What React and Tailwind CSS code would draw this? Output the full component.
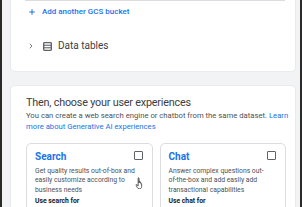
import { ChevronRight, Plus } from 'lucide-react';

function TableIcon() {
  return (
    <svg width="9" height="9" viewBox="0 0 10 10" className="shrink-0">
      <rect x="0.75" y="0.75" width="8.5" height="8.5" rx="0.8" fill="none" stroke="#5f6368" strokeWidth="1.5" />
      <line x1="1" y1="3.6" x2="9" y2="3.6" stroke="#5f6368" strokeWidth="1.2" />
      <line x1="1" y1="6.4" x2="9" y2="6.4" stroke="#5f6368" strokeWidth="1.2" />
    </svg>
  );
}

function Hand() {
  return (
    <svg width="10" height="12" viewBox="0 0 11 13" className="absolute left-[108px] top-[33px]">
      <path d="M3.5 1.2c0-.6.9-.6.9 0v5l.2-1.2c0-.6.9-.6.9 0v1.4c0-.6.9-.6.9 0v1c0-.5.9-.5.9 0v3c0 1.5-1 2.4-2.4 2.4H4.4c-.8 0-1.3-.4-1.7-1L1.2 8.9c-.3-.5.3-1 .7-.6l1.6 1.3z" fill="#fff" stroke="#202124" strokeWidth="0.8" strokeLinejoin="round" />
    </svg>
  );
}

function Option({ title, lines, use, hand }) {
  return (
    <div className="relative flex-1 bg-white border border-[#dadce0] rounded-[5px] pl-[8px] pr-[9px] pt-[6px] h-[80px]">
      <div className="flex items-start justify-between">
        <span className="text-[10px] font-bold text-[#1a73e8] leading-[12px] mt-[1px]">{title}</span>
        <span className="w-[9px] h-[9px] border-[1.5px] border-[#5f6368] rounded-[1px] mt-[1px]" />
      </div>
      <p className="mt-[4px] text-[6.8px] leading-[9.3px] text-[#4d5156]">
        {lines.map((l, i) => <span key={i} className="block whitespace-nowrap">{l}</span>)}
      </p>
      <p className="mt-[2px] text-[6.8px] font-bold leading-[9px] text-[#202124]">{use}</p>
      {hand && <Hand />}
    </div>
  );
}

export default function App() {
  return (
    <div className="w-[302px] h-[207px] overflow-hidden bg-[#f1f3f4] border-l-[2px] border-r-[2px] border-[#2a2a2a] font-['Roboto',sans-serif]">
      <div className="ml-[8px] mr-[4px] bg-white rounded-b-[5px] h-[72px] pl-[14px] pr-[10px] border border-t-0 border-[#e8eaed]">
        <div className="h-[1px] bg-[#dadce0]" />
        <div className="flex items-center gap-[6px] mt-[6px] pl-[3px] text-[#1a73e8]">
          <Plus size={8} strokeWidth={3} />
          <span className="text-[8px] font-medium leading-[10px]">Add another GCS bucket</span>
        </div>
        <div className="flex items-center mt-[22px] pl-[2px] text-[#3c4043]">
          <ChevronRight size={8} strokeWidth={2.5} className="text-[#5f6368]" />
          <span className="ml-[8px]"><TableIcon /></span>
          <span className="ml-[6px] text-[10px] leading-[14px]">Data tables</span>
        </div>
      </div>
      <div className="ml-[8px] mr-[4px] mt-[13px] bg-white rounded-[5px] h-[140px] pl-[15px] pr-[8px] pt-[10px] border border-[#e8eaed]">
        <h2 className="text-[10.8px] tracking-[-0.2px] leading-[14px] text-[#3c4043]">Then, choose your user experiences</h2>
        <p className="mt-[1px] text-[7.7px] leading-[10.5px] text-[#4d5156] whitespace-nowrap">
          You can create a web search engine or chatbot from the same dataset. <span className="text-[#1a73e8]">Learn</span>
          <br />
          <span className="text-[#1a73e8]">more about Generative AI  experiences</span>
        </p>
        <div className="flex gap-[7px] mt-[11px] pr-[1px]">
          <Option title="Search" lines={['Get quality results out-of-box and', 'easily customize according to', 'business needs']} use="Use search for" hand />
          <Option title="Chat" lines={['Answer complex questions out-', 'of-the-box and add easily add', 'transactional capabilities']} use="Use chat for" />
        </div>
      </div>
    </div>
  );
}
